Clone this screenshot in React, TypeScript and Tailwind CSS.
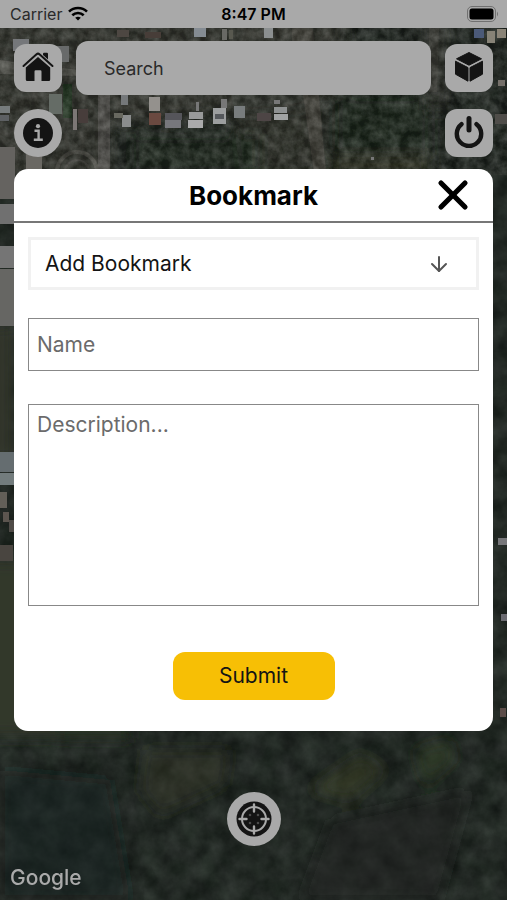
import { useState } from "react";
import { ArrowDown, X } from "lucide-react";

type Patch = [x: number, y: number, w: number, h: number, color: string];

const ROOFS: Patch[] = [
  [13, 39, 16, 12, "#74777a"], [50, 46, 19, 16, "#686a6a"],
  [49, 94, 13, 20, "#656c66"], [73, 109, 4, 21, "#7c7775"], [78, 109, 10, 14, "#473c3b"],
  [0, 106, 10, 7, "#777b7d"], [0, 115, 9, 6, "#5d6164"],
  [121, 95, 7, 10, "#75787a"], [122, 115, 9, 12, "#8b8d8d"], [114, 113, 9, 5, "#67675f"],
  [149, 97, 11, 14, "#94918d"], [149, 113, 12, 12, "#6b4a40"], [165, 113, 17, 7, "#55555a"],
  [165, 120, 16, 8, "#77777c"], [189, 112, 14, 7, "#999a9a"], [188, 120, 15, 8, "#aaaaab"],
  [196, 102, 3, 9, "#777"], [213, 108, 13, 16, "#9c9e9f"], [215, 114, 9, 5, "#55585c"],
  [221, 99, 6, 9, "#777"], [234, 106, 11, 12, "#787b7d"],
  [117, 30, 12, 7, "#4e4642"], [145, 32, 16, 6, "#463c38"], [194, 28, 12, 9, "#858c93"],
  [222, 29, 5, 11, "#696965"], [229, 30, 4, 9, "#585850"], [264, 28, 9, 10, "#8b8f90"],
  [257, 113, 14, 8, "#4d4545"], [274, 100, 6, 4, "#777"], [274, 107, 13, 6, "#8e9191"],
  [274, 114, 14, 6, "#a1a3a3"], [474, 29, 10, 9, "#4c5a78"], [487, 31, 8, 12, "#878377"],
  [497, 29, 9, 9, "#8a8477"], [495, 114, 12, 10, "#4f4e49"], [498, 80, 7, 6, "#75706a"],
  [0, 147, 15, 52, "#656460"], [26, 154, 16, 18, "#6a6864"], [0, 204, 14, 20, "#70706f"],
  [0, 246, 14, 22, "#747574"], [0, 269, 14, 57, "#666663"], [0, 452, 15, 20, "#656d70"],
  [0, 473, 15, 12, "#737b7d"], [0, 492, 7, 16, "#645e59"], [3, 512, 6, 10, "#5b5550"],
  [9, 520, 5, 12, "#504b47"], [0, 545, 13, 16, "#4a4541"], [501, 614, 6, 7, "#6b6b70"],
  [500, 708, 6, 9, "#5b4e4a"], [498, 538, 9, 7, "#77777a"], [371, 157, 3, 3, "#777"],
];

function SatelliteMap() {
  return (
    <svg
      className="absolute inset-0 h-full w-full"
      viewBox="0 0 507 900"
      preserveAspectRatio="xMidYMid slice"
      aria-hidden="true"
    >
      <defs>
        <filter id="foliage" x="0" y="0" width="100%" height="100%" colorInterpolationFilters="sRGB">
          <feTurbulence type="fractalNoise" baseFrequency="0.05" numOctaves="5" seed="8" />
          <feColorMatrix values="0.15 0.03 0 0 0.045  0.15 0.05 0 0 0.06  0.15 0.03 0 0 0.052  0 0 0 0 1" />
        </filter>
        <filter id="grain" x="0" y="0" width="100%" height="100%" colorInterpolationFilters="sRGB">
          <feTurbulence type="fractalNoise" baseFrequency="0.1" numOctaves="4" seed="3" />
          <feColorMatrix values="0.9 0 0 0 -0.24  0.9 0 0 0 -0.23  0.9 0 0 0 -0.25  0 0 0 0 0.4" />
        </filter>
        <filter id="soft">
          <feGaussianBlur stdDeviation="7" />
        </filter>
        <filter id="edge">
          <feGaussianBlur stdDeviation="0.7" />
        </filter>
      </defs>
      <rect width="507" height="900" filter="url(#foliage)" />
      <g filter="url(#soft)">
        <path d="M-20 0H345V90L300 110L110 125V180H-20Z" fill="#3d3e39" opacity=".8" />
        <path d="M230 90H325V175H240Z" fill="#3b3b34" opacity=".7" />
        <path d="M330 155H430V175H330Z" fill="#383a2c" />
        <path d="M420 20H450V110H425Z" fill="#3b3d38" opacity=".7" />
        <path d="M-20 326H14V460H-20Z" fill="#33362b" />
        <path d="M-20 560H60V736H-20Z" fill="#30392b" />
        <path d="M60 690H130V738H60Z" fill="#2a3627" />
        <path d="M145 750L230 750L225 785L160 815L140 790Z" fill="#383c27" opacity=".35" />
        <path d="M310 790L360 755L385 770L350 800Z" fill="#414426" opacity=".45" />
        <path d="M415 750L450 740L455 760L425 785Z" fill="#344627" opacity=".45" />
        <path d="M0 770L110 780L130 900H0Z" fill="#1c201d" opacity=".5" />
        <path d="M330 820L470 790L440 900H300Z" fill="#1f2421" opacity=".5" />
        <path d="M130 134H260V175H130Z" fill="#202d20" opacity=".8" />
        <path d="M335 96H430V150H335Z" fill="#1f2e20" opacity=".6" />
      </g>
      <g filter="url(#edge)">
        <path d="M98 90H110V172H98Z" fill="#5a5954" />
        <path d="M0 60L40 66L80 70V76L0 74Z" fill="#5c5b56" />
        <path d="M292 20H312L326 172H314L303 95H292Z" fill="#4b4843" />
        <path d="M429 28H439L437 92H429Z" fill="#43433e" />
        <path d="M63 84L72 84V118H63Z" fill="#263d25" />
        <circle cx="77" cy="172" r="20" fill="none" stroke="#57554f" strokeWidth="4" />
        <circle cx="77" cy="172" r="12" fill="none" stroke="#4c4a45" strokeWidth="2" />
      </g>
      <rect width="507" height="175" filter="url(#grain)" opacity=".85" />
      <g filter="url(#edge)">
        {ROOFS.map(([x, y, w, h, color]) => (
          <rect key={`${x}-${y}`} x={x} y={y} width={w} height={h} fill={color} />
        ))}
      </g>
    </svg>
  );
}

function WifiIcon() {
  return (
    <svg className="h-4 w-5" viewBox="0 0 20 16" fill="none" stroke="#000" strokeWidth="2.6" aria-hidden="true">
      <path d="M1 5.6C6 .8 14 .8 19 5.6" />
      <path d="M4.3 9.2C7.5 6.2 12.5 6.2 15.7 9.2" />
      <path d="M10 14.6L7.2 11.8Q10 9.6 12.8 11.8Z" fill="#000" stroke="none" />
    </svg>
  );
}

function BatteryIcon() {
  return (
    <svg className="h-4 w-8" viewBox="0 0 32 16" aria-hidden="true">
      <rect x=".5" y=".5" width="28" height="15" rx="4.5" fill="none" stroke="#707070" />
      <rect x="2.5" y="2.5" width="24" height="11" rx="2.5" />
      <path d="M30 5.5Q32 8 30 10.5Z" fill="#707070" />
    </svg>
  );
}

function HomeIcon() {
  return (
    <svg className="size-8" viewBox="0 0 32 32" fill="currentColor" aria-hidden="true">
      <path d="M3.800 16.500L16 6L28.200 16.500V28.500Q28.200 30 26.700 30H19.500V20.500Q19.500 19.300 18.300 19.300H13.700Q12.500 19.300 12.500 20.500V30H5.300Q3.800 30 3.800 28.500Z" />
      <path d="M21 3Q21 1.800 22 1.800H25Q26 1.800 26 3V10.500L21 6.300Z" />
      <path d="M1.500 15.200L14.500 3.400Q16 2.200 17.500 3.400L30.500 15.200" fill="none" stroke="#a9a9a9" strokeWidth="4" />
      <path d="M1.500 15L14.500 3.200Q16 2 17.500 3.200L30.500 15" fill="none" stroke="currentColor" strokeWidth="2" strokeLinecap="round" />
    </svg>
  );
}

function CubeIcon() {
  return (
    <svg className="size-8" viewBox="0 0 32 32" fill="currentColor" stroke="currentColor" strokeLinejoin="round" aria-hidden="true">
      <path d="M16 1.500L28.500 7.800L16 14.200L3.500 7.800Z" />
      <path d="M2.500 10.200L15 16.600V30.200L2.500 23.200Z" />
      <path d="M29.500 10.200L17 16.600V30.200L29.500 23.200Z" />
    </svg>
  );
}

function InfoIcon() {
  return (
    <svg className="size-[30px]" viewBox="0 0 30 30" aria-hidden="true">
      <circle cx="15" cy="15" r="15" fill="currentColor" />
      <circle cx="15" cy="8.200" r="2.100" fill="#a9a9a9" />
      <path d="M11.500 12.800H15.600V21.800M10.800 21.800H19.800" fill="none" stroke="#a9a9a9" strokeWidth="2.400" />
    </svg>
  );
}

function PowerIcon() {
  return (
    <svg className="size-8" viewBox="0 0 32 32" fill="none" stroke="currentColor" strokeWidth="4.400" strokeLinecap="round" aria-hidden="true">
      <path d="M8.500 8.200A12.200 12.200 0 1 0 23.500 8.200" />
      <path d="M16 2.500V14" strokeWidth="5" />
    </svg>
  );
}

function TargetIcon() {
  return (
    <svg className="size-9" viewBox="0 0 36 36" aria-hidden="true">
      <circle cx="18" cy="18" r="17.500" fill="#141414" />
      <g fill="none" stroke="#a9a9a9" strokeWidth="2" strokeLinecap="round">
        <circle cx="18" cy="18" r="12" />
        <path d="M18 3.500V10.500M18 25.500V32.500M3.500 18H10.500M25.500 18H32.500" strokeWidth="2.400" />
      </g>
      <g fill="#4a4a4a">
        <circle cx="14" cy="14" r="1.300" />
        <circle cx="22" cy="14" r="1.300" />
        <circle cx="14" cy="22" r="1.300" />
        <circle cx="22" cy="22" r="1.300" />
      </g>
    </svg>
  );
}

const tile = "flex size-12 shrink-0 items-center justify-center bg-[#a9a9a9] text-[#141414]";

export default function App() {
  const [open, setOpen] = useState(true);

  return (
    <div className="relative flex min-h-screen flex-col overflow-hidden bg-[#202620] font-[Inter,'Liberation_Sans',sans-serif]">
      <SatelliteMap />

      <header className="relative grid h-7 grid-cols-3 items-center bg-[#a9a9a9] px-2 text-base text-black">
        <div className="flex items-center gap-1.5 pl-0.5 text-[#2a2a2a]">
          Carrier
          <WifiIcon />
        </div>
        <time className="text-center font-semibold">8:47 PM</time>
        <div className="flex justify-end">
          <BatteryIcon />
        </div>
      </header>

      <main className="relative flex grow flex-col px-3.5 pt-[13px]">
        <nav className="flex flex-col gap-3.5">
          <div className="flex items-center gap-3.5">
            <button type="button" aria-label="Home" className={`${tile} rounded-xl pb-0.5`}>
              <HomeIcon />
            </button>
            <input
              type="search"
              aria-label="Search"
              placeholder="Search"
              className="h-13.5 min-w-0 grow rounded-xl bg-[#a9a9a9] px-7 text-lg text-[#2a2a2a] outline-none placeholder:text-[#2a2a2a]"
            />
            <button type="button" aria-label="3D view" className={`${tile} rounded-xl pb-0.5`}>
              <CubeIcon />
            </button>
          </div>
          <div className="flex justify-between">
            <button type="button" aria-label="Information" className={`${tile} rounded-full`}>
              <InfoIcon />
            </button>
            <button type="button" aria-label="Log out" className={`${tile} rounded-xl pb-0.5`}>
              <PowerIcon />
            </button>
          </div>
        </nav>

        {open && (
          <section role="dialog" aria-labelledby="dialog-title" className="mt-3 rounded-[14px] bg-white">
            <div className="grid h-[54px] grid-cols-[1fr_auto_1fr] items-center border-b-2 border-[#777] px-4">
              <h1 id="dialog-title" className="col-start-2 text-[26px] font-bold text-black">
                Bookmark
              </h1>
              <button type="button" aria-label="Close" onClick={() => setOpen(false)} className="justify-self-end text-black">
                <X className="size-12" strokeWidth={2.6} />
              </button>
            </div>

            <form
              className="flex flex-col px-3.5 pt-3.5 pb-[31px] text-[21px] text-[#141414]"
              onSubmit={(e) => e.preventDefault()}
            >
              <div className="relative">
                <select
                  aria-label="Bookmark action"
                  className="block h-[53px] w-full appearance-none border-3 border-[#f1f1f1] bg-white px-3.5 outline-none"
                >
                  <option>Add Bookmark</option>
                </select>
                <ArrowDown className="pointer-events-none absolute top-1/2 right-7 size-6 -translate-y-1/2 text-[#555]" />
              </div>
              <input
                type="text"
                aria-label="Name"
                placeholder="Name"
                className="mt-7 h-[53px] border border-[#888] px-2 outline-none placeholder:text-[#6b6b6b]"
              />
              <textarea
                aria-label="Description"
                placeholder="Description..."
                className="mt-[33px] h-[202px] resize-none border border-[#888] px-2 py-1 outline-none placeholder:text-[#6b6b6b]"
              />
              <button type="submit" className="mt-[46px] h-12 w-[162px] self-center rounded-xl bg-[#f7bf05]">
                Submit
              </button>
            </form>
          </section>
        )}

        <button
          type="button"
          aria-label="My location"
          className="mt-[61px] flex size-13.5 items-center justify-center self-center rounded-full bg-[#a9a9a9]"
        >
          <TargetIcon />
        </button>
      </main>

      <footer className="relative px-2.5 pb-2 text-[21px] leading-7 font-medium text-[#aaa]">Google</footer>
    </div>
  );
}
